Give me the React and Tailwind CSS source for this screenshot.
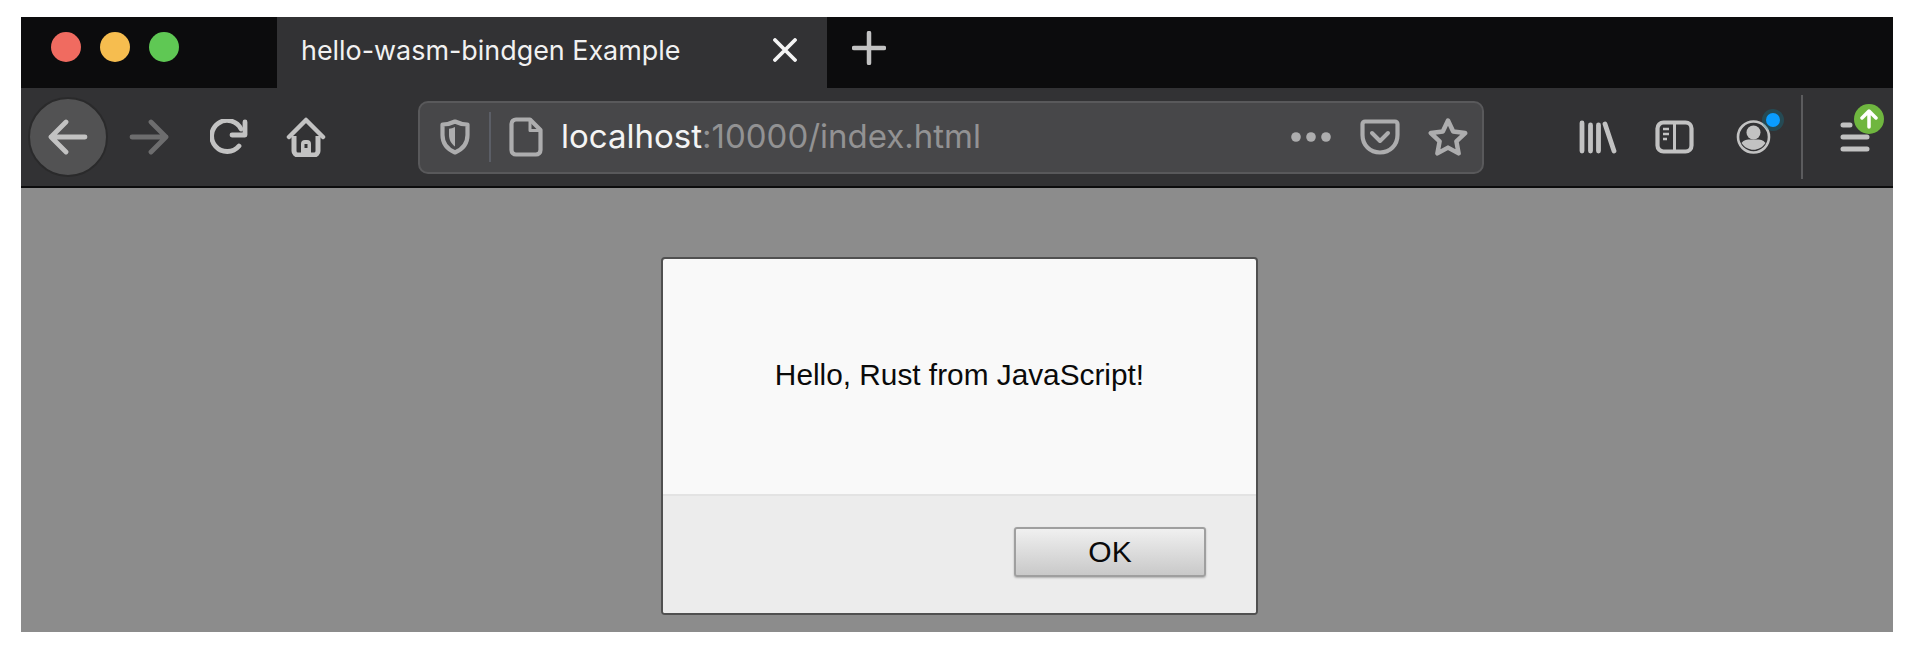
import React from "react";

const ICON = "#c2c2c2";
const DIM = "#adadae";

function BackIcon() {
  return (
    <svg width="40" height="36" viewBox="0 0 40 36" fill="none" stroke={ICON} strokeWidth="4.800" strokeLinecap="round" strokeLinejoin="round">
      <path d="M37 18H3M18 3L3 18l15 15" />
    </svg>
  );
}

function ForwardIcon() {
  return (
    <svg width="40" height="36" viewBox="0 0 40 36" fill="none" stroke="#6d6d6e" strokeWidth="4.800" strokeLinecap="round" strokeLinejoin="round">
      <path d="M3 18h34M22 3l15 15-15 15" />
    </svg>
  );
}

function ReloadIcon() {
  return (
    <svg width="38" height="36" viewBox="0 0 38 36" fill="none" stroke={ICON} strokeWidth="4.800" strokeLinecap="round" strokeLinejoin="round">
      <path d="M29 27a15.500 15.500 0 1 1 2-17" />
      <path d="M35 3v13H22" />
    </svg>
  );
}

function HomeIcon() {
  return (
    <svg width="40" height="40" viewBox="0 0 40 40" fill="none">
      <path d="M3 20L20 3l17 17" stroke={ICON} strokeWidth="4.500" strokeLinecap="round" strokeLinejoin="round" />
      <path d="M8 19v15a4 4 0 0 0 4 4h16a4 4 0 0 0 4-4V19" stroke={ICON} strokeWidth="5" strokeLinejoin="round" />
      <path d="M15 38V27a4 4 0 0 1 4-4h2a4 4 0 0 1 4 4v11z" fill={ICON} />
      <rect x="18.500" y="27" width="3" height="4" fill="#323234" />
    </svg>
  );
}

function ShieldIcon() {
  return (
    <svg width="30" height="36" viewBox="0 0 30 36" fill="none">
      <path d="M15 2.500c4 2 8 3 12.500 3V16c0 8.500-5.500 14.500-12.500 17.500C8 30.500 2.500 24.500 2.500 16V5.500C7 5.500 11 4.500 15 2.500z" stroke={DIM} strokeWidth="4.200" strokeLinejoin="round" />
      <path d="M15 8c-2 1-4 1.500-6 1.700V16c0 5 2.500 9 6 11.500z" fill={DIM} />
    </svg>
  );
}

function PageIcon() {
  return (
    <svg width="34" height="40" viewBox="0 0 34 40" fill="none" stroke={DIM} strokeWidth="4.200" strokeLinejoin="round">
      <path d="M7 2.500h14L31.500 13v20a4.500 4.500 0 0 1-4.500 4.500H7A4.500 4.500 0 0 1 2.500 33V7A4.500 4.500 0 0 1 7 2.500z" />
      <path d="M21 4v9.500h10" strokeWidth="3" />
    </svg>
  );
}

function DotsIcon() {
  return (
    <svg width="40" height="14" viewBox="0 0 40 14" fill={DIM}>
      <circle cx="5" cy="7" r="4.800" />
      <circle cx="20" cy="7" r="4.800" />
      <circle cx="35" cy="7" r="4.800" />
    </svg>
  );
}

function PocketIcon() {
  return (
    <svg width="40" height="36" viewBox="0 0 40 36" fill="none" stroke={DIM} strokeLinecap="round" strokeLinejoin="round">
      <path d="M5 2.500h30A2.500 2.500 0 0 1 37.500 5v11c0 10-7.500 17.500-17.500 17.500S2.500 26 2.500 16V5A2.500 2.500 0 0 1 5 2.500z" strokeWidth="4.200" />
      <path d="M12 14l8 8 8-8" strokeWidth="4" />
    </svg>
  );
}

function StarIcon() {
  return (
    <svg width="40" height="40" viewBox="0 0 40 40" fill="none" stroke={DIM} strokeWidth="4.500" strokeLinejoin="round">
      <path d="M20 3.500l5.200 11 12 1.600-8.800 8.300 2.200 12L20 30.600 9.400 36.400l2.200-12-8.800-8.300 12-1.600z" />
    </svg>
  );
}

function LibraryIcon() {
  return (
    <svg width="38" height="34" viewBox="0 0 38 34" fill="none" stroke={ICON} strokeWidth="4.800" strokeLinecap="round">
      <path d="M3 3v28M11.500 5v26M19.500 5v26M26 4l9 27" />
    </svg>
  );
}

function SidebarIcon() {
  return (
    <svg width="39" height="34" viewBox="0 0 39 34" fill="none" stroke={ICON}>
      <rect x="2.500" y="2.500" width="34" height="29" rx="6" strokeWidth="4.200" />
      <path d="M19.500 2v30" strokeWidth="3" />
      <path d="M8 9h6M8 14h6M8 19h4" strokeWidth="2.400" />
    </svg>
  );
}

function ProfileIcon() {
  return (
    <svg width="35" height="34" viewBox="0 0 35 34" fill="none">
      <circle cx="17.500" cy="17" r="15.500" stroke={ICON} strokeWidth="2.600" />
      <circle cx="17.500" cy="12.500" r="7" fill={ICON} />
      <path d="M5.500 23c3-4 7.500-3.500 12-3.500s9-.5 12 3.500c-3 4.500-7.500 6.800-12 6.800S8.500 27.500 5.500 23z" fill={ICON} />
    </svg>
  );
}

function MenuIcon() {
  return (
    <svg width="30" height="30" viewBox="0 0 30 30" fill="none" stroke={ICON} strokeWidth="5" strokeLinecap="round">
      <path d="M3 3h7M3 15h24M3 27h24" />
    </svg>
  );
}

export default function App() {
  return (
    <div className="w-[1912px] h-[646px] bg-white pt-[17px] pl-[21px] pr-[19px] pb-[14px] overflow-hidden font-['Inter',sans-serif]">
      <div className="h-full flex flex-col bg-[#8c8c8c]">
        {/* Tab strip */}
        <div className="h-[71px] shrink-0 flex bg-[#0c0c0d]">
          <div className="w-[256px] shrink-0 flex items-center pl-[30px] pb-[11px] gap-[19px]">
            <div className="w-[30px] h-[30px] rounded-full bg-[#f06b60]" />
            <div className="w-[30px] h-[30px] rounded-full bg-[#f6bd4f]" />
            <div className="w-[30px] h-[30px] rounded-full bg-[#5fc854]" />
          </div>
          <div className="w-[550px] shrink-0 flex items-center bg-[#323234] pl-[24px] pb-[5px]">
            <span className="w-[472px] text-[26.900px] text-[#f1f1f1] whitespace-nowrap">hello-wasm-bindgen Example</span>
            <svg width="24" height="24" viewBox="0 0 24 24" fill="none" stroke="#f4f4f4" strokeWidth="3.800" strokeLinecap="round">
              <path d="M2 2l20 20M22 2L2 22" />
            </svg>
          </div>
          <div className="ml-[25px] flex items-center pb-[9px]">
            <svg width="34" height="34" viewBox="0 0 34 34" fill="none" stroke="#c2c2c2" strokeWidth="4.500" strokeLinecap="round">
              <path d="M17 2v30M2 17h30" />
            </svg>
          </div>
        </div>

        {/* Toolbar */}
        <div className="h-[98px] shrink-0 flex items-center bg-[#323234]">
          <div className="ml-[7px] w-[80px] h-[80px] shrink-0 rounded-full bg-[#525253] border-2 border-[#2a2a2b] flex items-center justify-center">
            <BackIcon />
          </div>
          <div className="ml-[21px] shrink-0 flex"><ForwardIcon /></div>
          <div className="ml-[41px] shrink-0 flex"><ReloadIcon /></div>
          <div className="ml-[38px] shrink-0 flex"><HomeIcon /></div>

          {/* URL bar */}
          <div className="ml-[92px] w-[1066px] h-[73px] shrink-0 flex items-center rounded-[10px] bg-[#474749] border-2 border-[#59595b]">
            <div className="ml-[20px] flex"><ShieldIcon /></div>
            <div className="ml-[19px] w-[2px] h-[50px] bg-[#5b5e66]" />
            <div className="ml-[18px] flex"><PageIcon /></div>
            <div className="ml-[18px] text-[33px] whitespace-nowrap">
              <span className="text-[#f4f4f4]">localhost</span>
              <span className="text-[#929293]">:10000/index.html</span>
            </div>
            <div className="ml-auto flex items-center">
              <DotsIcon />
              <div className="ml-[29px] flex"><PocketIcon /></div>
              <div className="ml-[28px] mr-[14px] flex"><StarIcon /></div>
            </div>
          </div>

          <div className="ml-[95px] flex"><LibraryIcon /></div>
          <div className="ml-[38px] flex"><SidebarIcon /></div>
          <div className="relative ml-[42px] flex">
            <ProfileIcon />
            <div className="absolute left-[30px] top-[-7px] w-[14px] h-[14px] rounded-full bg-[#0a9dff] shadow-[0_0_0_4px_rgba(10,132,160,0.3)]" />
          </div>
          <div className="ml-[30px] w-[2px] h-[84px] bg-[#5c5c5e]" />
          <div className="relative ml-[37px] flex">
            <MenuIcon />
            <div className="absolute left-[14px] top-[-18px] w-[30px] h-[30px] rounded-full bg-[#6fb63f] flex items-center justify-center">
              <svg width="18" height="20" viewBox="0 0 18 20" fill="none" stroke="#ffffff" strokeWidth="3.500" strokeLinecap="round" strokeLinejoin="round">
                <path d="M9 18V3M2 9l7-7 7 7" />
              </svg>
            </div>
          </div>
        </div>
        <div className="h-[2px] shrink-0 bg-[#0c0c0d]" />

        {/* Page with alert dialog */}
        <div className="flex-1 pt-[69px] pl-[640px]">
          <div className="w-[597px] h-[358px] flex flex-col rounded-[4px] border-2 border-[#505050] overflow-hidden bg-[#f9f9f9] font-['Liberation_Sans',sans-serif]">
            <div className="h-[237px] shrink-0 flex items-center justify-center pb-[2px] border-b-2 border-[#e3e3e3] text-[29.800px] text-[#0a0a0a]">
              Hello, Rust from JavaScript!
            </div>
            <div className="flex-1 flex justify-end items-start bg-[#ececec] pt-[31px] pr-[50px]">
              <button className="w-[192px] h-[50px] rounded-[3px] border-2 border-[#9f9f9f] bg-gradient-to-b from-[#f0f0f0] to-[#c9c9c9] text-[30px] leading-none text-[#0a0a0a] shadow-[0_1px_2px_rgba(0,0,0,0.25)]">
                OK
              </button>
            </div>
          </div>
        </div>
      </div>
    </div>
  );
}
